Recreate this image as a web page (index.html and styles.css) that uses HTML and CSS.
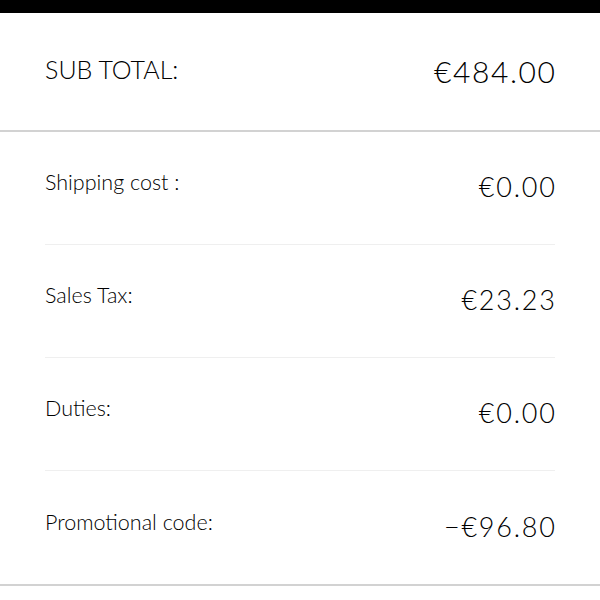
FILE: index.html
```html
<!DOCTYPE html>
<html lang="en">
<head>
<meta charset="utf-8">
<title>Order summary</title>
<link rel="stylesheet" href="styles.css">
</head>
<body>
<div class="topbar"></div>
<section class="subtotal">
  <span class="subtotal-label">SUB TOTAL:</span>
  <span class="subtotal-amount">€484.00</span>
</section>
<section class="details">
  <div class="row"><span class="label">Shipping cost :</span><span class="amount">€0.00</span></div>
  <div class="row"><span class="label">Sales Tax:</span><span class="amount">€23.23</span></div>
  <div class="row"><span class="label">Duties:</span><span class="amount">€0.00</span></div>
  <div class="row"><span class="label">Promotional code:</span><span class="amount">−€96.80</span></div>
</section>
</body>
</html>
```

FILE: styles.css
```css
html, body {
  margin: 0;
  padding: 0;
  background: #fff;
}
body {
  font-family: Lato, "Liberation Sans", sans-serif;
  font-weight: 300;
  color: #000;
}
.topbar {
  height: 13px;
  background: #000;
}
.subtotal {
  box-sizing: border-box;
  height: 119px;
  padding: 0 45px;
  display: flex;
  align-items: center;
  justify-content: space-between;
  border-bottom: 2px solid #d2d2d2;
}
.subtotal-label {
  font-size: 25px;
  margin-top: -6px;
}
.subtotal-amount {
  font-size: 30px;
  letter-spacing: 1.6px;
  margin-right: -1.6px;
  margin-top: -2px;
}
.details {
  border-bottom: 2px solid #d2d2d2;
}
.row {
  margin: 0 45px;
  height: 113px;
  box-sizing: border-box;
  display: flex;
  align-items: center;
  justify-content: space-between;
  border-bottom: 1px solid #efefef;
}
.row:last-child {
  border-bottom: none;
}
.label {
  font-size: 21.5px;
  margin-top: -12px;
}
.amount {
  font-size: 27px;
  letter-spacing: 1.8px;
  margin-right: -1.8px;
  margin-top: -3px;
}
```
